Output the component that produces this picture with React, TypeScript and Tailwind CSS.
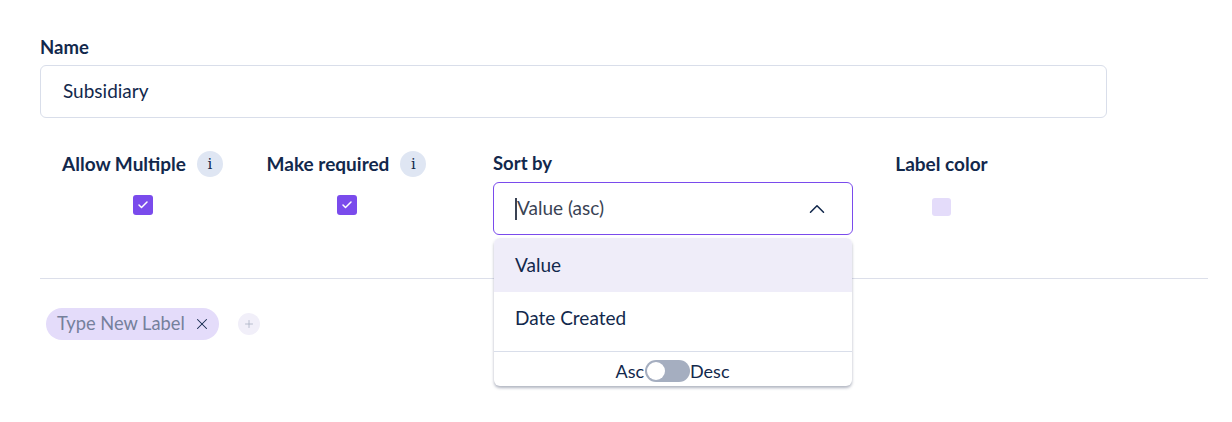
import { Check, ChevronUp, Plus, X } from "lucide-react";

function InfoBadge() {
  return (
    <span className="flex h-[26px] w-[26px] items-center justify-center rounded-full bg-[#dfe6f3] font-['DejaVu_Serif',serif] text-[15px] leading-none text-[#12284c]">
      i
    </span>
  );
}

function CheckColumn({ label, width }: { label: string; width: string }) {
  return (
    <div className={`flex flex-col items-center ${width}`}>
      <div className="flex h-[28px] items-center gap-[11px]">
        <span className="whitespace-nowrap text-[19px] font-bold text-[#12284c]">{label}</span>
        <InfoBadge />
      </div>
      <span className="mt-[17px] flex h-5 w-5 items-center justify-center rounded-[3px] bg-[#7a4bec]">
        <Check className="h-3 w-3 text-white" strokeWidth={3} />
      </span>
    </div>
  );
}

export default function App() {
  return (
    <div className="h-[422px] w-[1232px] overflow-hidden bg-white pl-10 pt-[35px] font-['Lato',sans-serif]">
      <label className="block text-[18.5px] font-bold leading-6 text-[#12284c]">Name</label>
      <div className="mt-[6px] flex h-[53px] w-[1067px] items-center rounded-md border border-[#d9deea] pl-[22px] text-[19px] text-[#12284c]">
        Subsidiary
      </div>

      <div className="mt-8 flex h-[129px] w-[1168px] items-start border-b border-[#dcdfea] pl-[22px]">
        <CheckColumn label="Allow Multiple" width="w-[161px]" />
        <div className="ml-[44px]">
          <CheckColumn label="Make required" width="w-[159px]" />
        </div>

        <div className="relative ml-[67px] w-[360px]">
          <div className="flex h-[28px] items-center text-[18.5px] font-bold text-[#12284c]">Sort by</div>
          <div className="mt-1 flex h-[53px] items-center justify-between rounded-md border border-[#7a4bec] pl-[21px] pr-[22px] text-[19px] text-[#3a4354]">
            <span className="flex items-center">
              <span className="h-[22px] w-[2px] bg-[#3a4354]" />
              <span>Value (asc)</span>
            </span>
            <ChevronUp className="h-[26px] w-[26px] text-[#12284c]" strokeWidth={1.4} />
          </div>

          <div className="absolute left-px top-[88px] z-10 w-[358px] rounded-md bg-white text-[19px] text-[#12284c] shadow-[0_2px_3px_rgba(60,70,100,0.4)]">
            <div className="flex h-[54px] items-center rounded-t-md bg-[#efedf9] pl-[21px]">Value</div>
            <div className="flex h-[53px] items-center pl-[21px]">Date Created</div>
            <div className="mt-1.5 flex h-[35px] items-center justify-center border-t border-[#d9deea] pr-px pt-1 text-[18px]">
              <span className="mr-px">Asc</span>
              <span className="flex h-[22px] w-[45px] items-center rounded-full bg-[#a5aec0] pl-0.5">
                <span className="h-[18px] w-[18px] rounded-full bg-white" />
              </span>
              <span>Desc</span>
            </div>
          </div>
        </div>

        <div className="ml-[43px] flex w-[91px] flex-col items-center">
          <div className="flex h-[28px] items-center whitespace-nowrap text-[19px] font-bold text-[#12284c]">
            Label color
          </div>
          <span className="mt-[20px] h-[18px] w-[19px] rounded-[3px] bg-[#e4dcfa]" />
        </div>
      </div>

      <div className="ml-1.5 mt-[29px] flex items-center gap-[19px]">
        <span className="flex h-8 w-[173px] items-center rounded-full bg-[#e4dcfa] pl-[11px] text-[18.3px] text-[#75809c]">
          <span>Type New Label</span>
          <X className="ml-[8px] h-[18px] w-[18px] text-[#12284c]" strokeWidth={1.4} />
        </span>
        <span className="flex h-[22px] w-[22px] items-center justify-center rounded-full bg-[#f1eff9]">
          <Plus className="h-3 w-3 text-[#a5aec0]" strokeWidth={1.5} />
        </span>
      </div>
    </div>
  );
}
